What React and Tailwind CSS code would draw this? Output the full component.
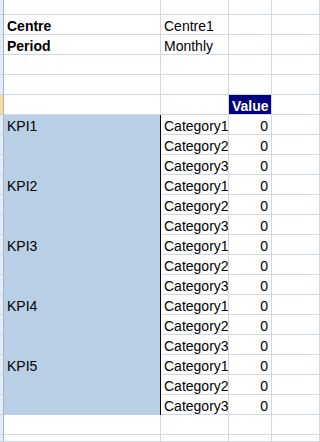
const GRID = "border-[#d0d7e5]";

const kpis = ["KPI1", "KPI2", "KPI3", "KPI4", "KPI5"];
const cats = ["Category1", "Category2", "Category3"];

// row header strip on the far left (one per sheet row)
const RowHead = ({ selected }) => (
  <div
    className={`border-r border-b border-r-[#9eb6ce] border-b-[#c5d3e3] ${
      selected ? "bg-[#f9d99f]" : "bg-[#e4ecf7]"
    }`}
  />
);

const Cell = ({ children, className = "" }) => (
  <div className={`border-r border-b ${GRID} px-[3px] pt-[3px] leading-[16px] whitespace-nowrap overflow-hidden ${className}`}>
    {children}
  </div>
);

const EmptyRow = () => (
  <>
    <RowHead />
    <Cell />
    <Cell />
    <Cell />
    <Cell />
  </>
);

const App = () => {
  return (
    <div
      className="w-[320px] h-[442px] overflow-hidden bg-white text-black text-[14px]"
      style={{ fontFamily: '"Liberation Sans", Arial, sans-serif' }}
    >
      <div className="grid grid-cols-[4px_157px_68px_43px_1fr] grid-rows-[15px_repeat(21,20px)_7px]">
        <EmptyRow />

        <RowHead />
        <Cell className="font-bold">Centre</Cell>
        <Cell>Centre1</Cell>
        <Cell />
        <Cell />

        <RowHead />
        <Cell className="font-bold">Period</Cell>
        <Cell>Monthly</Cell>
        <Cell />
        <Cell />

        <EmptyRow />
        <EmptyRow />

        {/* header row */}
        <RowHead selected />
        <Cell />
        <Cell />
        <Cell className="bg-[#000080] text-white font-bold text-center px-0">Value</Cell>
        <Cell />

        {kpis.map((kpi, k) =>
          cats.map((cat, i) => (
            <div key={kpi + cat} className="contents">
              <div
                className="border-r border-b border-r-[#9eb6ce] border-b-[#c5d3e3] bg-[#e4ecf7]"
                style={{ gridRow: 7 + k * 3 + i, gridColumn: 1 }}
              />
              {i === 0 && (
                <div
                  className="bg-[#b9cfe6] border-r border-black px-[3px] pt-[3px] leading-[16px]"
                  style={{ gridRow: `${7 + k * 3} / span 3`, gridColumn: 2 }}
                >
                  {kpi}
                </div>
              )}
              <Cell className="col-start-3">{cat}</Cell>
              <Cell className="text-right">0</Cell>
              <Cell />
            </div>
          ))
        )}

        <EmptyRow />
        <EmptyRow />
      </div>
    </div>
  );
};

export default App;
